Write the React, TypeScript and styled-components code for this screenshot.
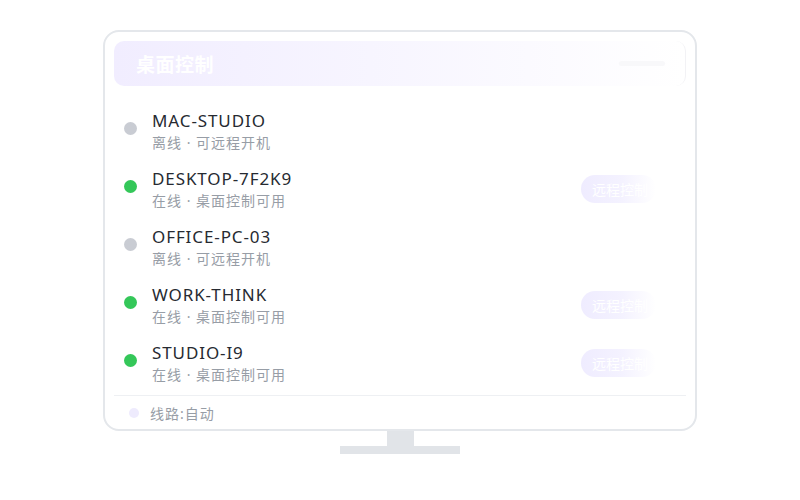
import React from "react";
import styled, { createGlobalStyle } from "styled-components";

const Global = createGlobalStyle`
  html, body { margin: 0; padding: 0; background: #ffffff; }
  body { font-family: "Noto Sans", "Noto Sans CJK SC", sans-serif; }
`;

const Page = styled.div`
  width: 800px;
  height: 500px;
  display: flex;
  flex-direction: column;
  align-items: center;
  padding-top: 30px;
  box-sizing: border-box;
`;

const Screen = styled.div`
  width: 594px;
  height: 401px;
  box-sizing: border-box;
  border: 2px solid #e4e7eb;
  border-radius: 16px;
  padding: 9px 9px 0 9px;
  display: flex;
  flex-direction: column;
  background: #fff;
`;

const Header = styled.div`
  height: 45px;
  flex-shrink: 0;
  border-radius: 10px;
  background: linear-gradient(90deg, #f1edff 0%, #f7f5ff 45%, #ffffff 100%);
  border-right: 1px solid #f2f2f5;
  display: flex;
  align-items: center;
  justify-content: space-between;
  padding: 0 16px 0 22px;
`;

const Title = styled.div`
  color: #ffffff;
  font-family: "Noto Sans CJK SC", sans-serif;
  font-weight: 700;
  font-size: 19px;
  letter-spacing: 0.5px;
`;

const HeaderPill = styled.div`
  width: 46px;
  height: 5px;
  border-radius: 3px;
  background: #f8f8fa;
  margin-right: 4px;
`;

const List = styled.div`
  display: flex;
  flex-direction: column;
  padding-top: 24px;
  flex: 1;
  min-height: 0;
  overflow: hidden;
`;

const Row = styled.div`
  height: 58px;
  flex-shrink: 0;
  display: flex;
  align-items: flex-start;
  padding-left: 10px;
  padding-right: 30px;
`;

const Dot = styled.div<{ $online: boolean }>`
  width: 13px;
  height: 13px;
  border-radius: 50%;
  background: ${(p) => (p.$online ? "#34c759" : "#c9ccd3")};
  margin-top: 12px;
  margin-right: 15px;
  flex-shrink: 0;
`;

const Info = styled.div`
  display: flex;
  flex-direction: column;
  flex: 1;
`;

const Name = styled.div`
  font-family: "Noto Sans", "Noto Sans CJK SC", sans-serif;
  font-size: 17px;
  color: #262a31;
  line-height: 22px;
  letter-spacing: 0.9px;
`;

const Sub = styled.div`
  font-family: "Noto Sans", "Noto Sans CJK SC", sans-serif;
  font-size: 14px;
  color: #979da6;
  line-height: 22px;
  letter-spacing: 1px;
`;

const Action = styled.div`
  width: 75px;
  height: 28px;
  margin-top: 7px;
  border-radius: 14px;
  background: linear-gradient(90deg, #efecff 0%, #f4f2ff 55%, #ffffff 100%);
  color: #ffffff;
  font-family: "Noto Sans CJK SC", sans-serif;
  font-size: 14px;
  display: flex;
  align-items: center;
  padding-left: 11px;
  box-sizing: border-box;
  overflow: hidden;
  white-space: nowrap;
`;

const Footer = styled.div`
  border-top: 1px solid #eef0f3;
  height: 33px;
  flex-shrink: 0;
  display: flex;
  align-items: center;
  padding-left: 15px;
`;

const FooterDot = styled.div`
  width: 10px;
  height: 10px;
  border-radius: 50%;
  background: #eeebfd;
  margin-right: 11px;
`;

const FooterText = styled.div`
  font-family: "Noto Sans", "Noto Sans CJK SC", sans-serif;
  font-size: 14px;
  letter-spacing: 1px;
  color: #979da6;
`;

const Neck = styled.div`
  width: 27px;
  height: 15px;
  background: #e1e4e8;
`;

const Base = styled.div`
  width: 120px;
  height: 8px;
  background: #e1e4e8;
`;

type Device = { name: string; online: boolean };

const devices: Device[] = [
  { name: "MAC-STUDIO", online: false },
  { name: "DESKTOP-7F2K9", online: true },
  { name: "OFFICE-PC-03", online: false },
  { name: "WORK-THINK", online: true },
  { name: "STUDIO-I9", online: true },
];

export default function App() {
  return (
    <>
      <Global />
      <Page>
        <Screen>
          <Header>
            <Title>桌面控制</Title>
            <HeaderPill />
          </Header>
          <List>
            {devices.map((d) => (
              <Row key={d.name}>
                <Dot $online={d.online} />
                <Info>
                  <Name>{d.name}</Name>
                  <Sub>{d.online ? "在线 · 桌面控制可用" : "离线 · 可远程开机"}</Sub>
                </Info>
                {d.online && <Action>远程控制</Action>}
              </Row>
            ))}
          </List>
          <Footer>
            <FooterDot />
            <FooterText>线路:自动</FooterText>
          </Footer>
        </Screen>
        <Neck />
        <Base />
      </Page>
    </>
  );
}
